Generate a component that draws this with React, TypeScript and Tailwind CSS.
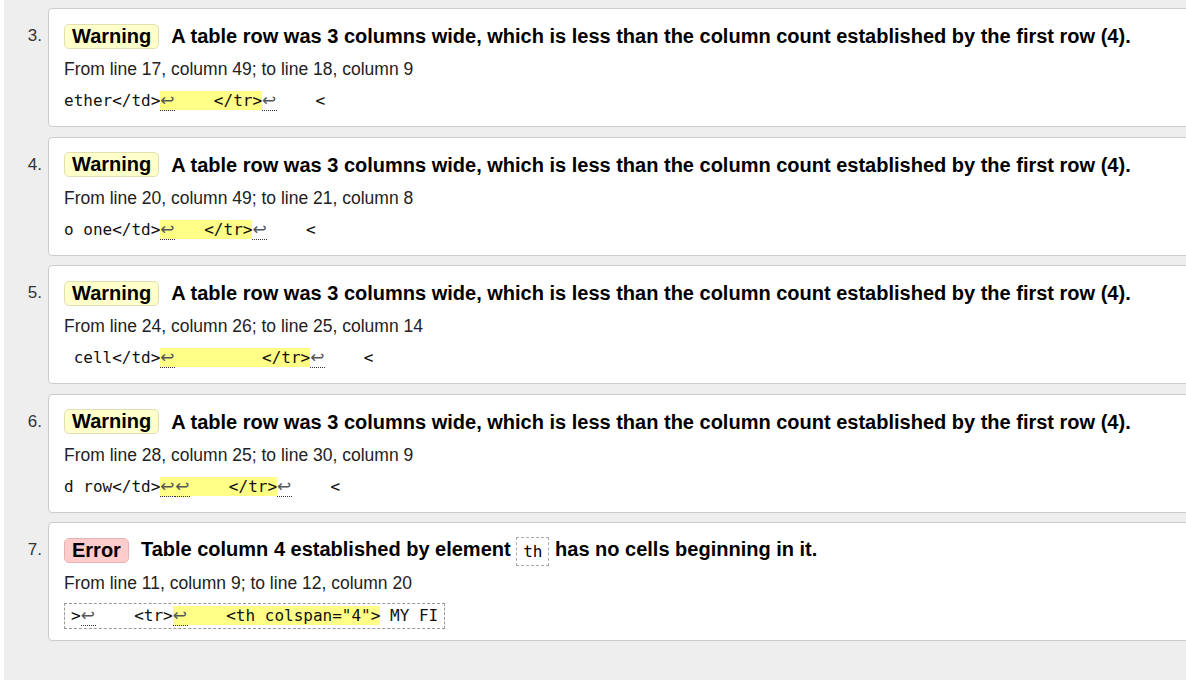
import React from "react";

type Seg = { t: string; hl?: boolean; lf?: boolean };

const sans = { fontFamily: '"Liberation Sans", Arial, sans-serif' };
const mono = { fontFamily: '"DejaVu Sans Mono", "Liberation Mono", monospace' };

function Arrow({ hl }: { hl?: boolean }) {
  return (
    <span
      className={
        "inline-block box-content w-[15px] h-[19px] leading-[19px] border-b border-dotted border-[#333] text-[17px] text-[#555] text-left overflow-hidden " +
        (hl ? "bg-[#ffff88]" : "")
      }
      style={{ fontFamily: '"DejaVu Sans", sans-serif' }}
    >
      ↩
    </span>
  );
}

function CodeLine({ segs, boxed }: { segs: Seg[]; boxed?: boolean }) {
  const inner = segs.map((s, i) =>
    s.lf ? (
      <Arrow key={i} hl={s.hl} />
    ) : (
      <span
        key={i}
        className={"inline-block h-[19px] leading-[19px] whitespace-pre " + (s.hl ? "bg-[#ffff88]" : "")}
      >
        {s.t}
      </span>
    )
  );
  return (
    <div className="flex items-start h-[20px] mt-[10px] text-[16px] text-[#111]" style={mono}>
      {boxed ? (
        <div className="flex items-start -mt-[2px] border border-dashed border-[#999] px-[6px] pt-[2px] pb-[2px]">{inner}</div>
      ) : (
        inner
      )}
    </div>
  );
}

type Item = {
  n: number;
  kind: "Warning" | "Error";
  title: React.ReactNode;
  loc: string;
  code: Seg[];
  boxed?: boolean;
};

const warnTitle = "A table row was 3 columns wide, which is less than the column count established by the first row (4).";

const items: Item[] = [
  {
    n: 3,
    kind: "Warning",
    title: warnTitle,
    loc: "From line 17, column 49; to line 18, column 9",
    code: [
      { t: "ether</td>" },
      { t: "", lf: true, hl: true },
      { t: "    </tr>", hl: true },
      { t: "", lf: true },
      { t: "    <" },
    ],
  },
  {
    n: 4,
    kind: "Warning",
    title: warnTitle,
    loc: "From line 20, column 49; to line 21, column 8",
    code: [
      { t: "o one</td>" },
      { t: "", lf: true, hl: true },
      { t: "   </tr>", hl: true },
      { t: "", lf: true },
      { t: "    <" },
    ],
  },
  {
    n: 5,
    kind: "Warning",
    title: warnTitle,
    loc: "From line 24, column 26; to line 25, column 14",
    code: [
      { t: " cell</td>" },
      { t: "", lf: true, hl: true },
      { t: "         </tr>", hl: true },
      { t: "", lf: true },
      { t: "    <" },
    ],
  },
  {
    n: 6,
    kind: "Warning",
    title: warnTitle,
    loc: "From line 28, column 25; to line 30, column 9",
    code: [
      { t: "d row</td>" },
      { t: "", lf: true, hl: true },
      { t: "", lf: true, hl: true },
      { t: "    </tr>", hl: true },
      { t: "", lf: true },
      { t: "    <" },
    ],
  },
  {
    n: 7,
    kind: "Error",
    title: (
      <>
        Table column 4 established by element{" "}
        <code
          className="inline-block border border-dashed border-[#aaa] px-[6px] leading-[27px] font-normal text-[16px] align-middle"
          style={mono}
        >
          th
        </code>{" "}
        has no cells beginning in it.
      </>
    ),
    loc: "From line 11, column 9; to line 12, column 20",
    boxed: true,
    code: [
      { t: ">" },
      { t: "", lf: true },
      { t: "    <tr>" },
      { t: "", lf: true, hl: true },
      { t: '    <th colspan="4">', hl: true },
      { t: " MY FI" },
    ],
  },
];

function Card({ it }: { it: Item }) {
  const isWarn = it.kind === "Warning";
  return (
    <div className="flex items-start">
      <div className="w-[40px] shrink-0 text-right pr-[2px] pt-[14px] text-[17px] leading-[28px] text-[#333]">
        {it.n}.
      </div>
      <div className="ml-[4px] flex-1 -mr-[20px] bg-white border border-[#ccc] rounded-[4px] pt-[13px] pl-[15px] pb-[16px] h-[119px] box-border">
        <div className="flex items-center h-[28px] text-[20px] font-bold text-black whitespace-nowrap">
          <span
            className={
              "inline-block h-[25px] leading-[23px] px-[7px] rounded-[5px] border mr-[12px] " +
              (isWarn ? "bg-[#ffffcc] border-[#e2dfb0]" : "bg-[#ffcccc] border-[#eab3b3]")
            }
          >
            {it.kind}
          </span>
          <span>{it.title}</span>
        </div>
        <div className="mt-[7px] h-[24px] leading-[24px] text-[17.5px] text-[#222]">{it.loc}</div>
        <CodeLine segs={it.code} boxed={it.boxed} />
      </div>
    </div>
  );
}

export default function App() {
  return (
    <div className="w-[1186px] h-[680px] bg-white overflow-hidden" style={sans}>
      <div className="ml-[4px] h-[680px] bg-[#eeeeee] pt-[8px] flex flex-col gap-[9.5px]">
        {items.map((it) => (
          <Card key={it.n} it={it} />
        ))}
      </div>
    </div>
  );
}
